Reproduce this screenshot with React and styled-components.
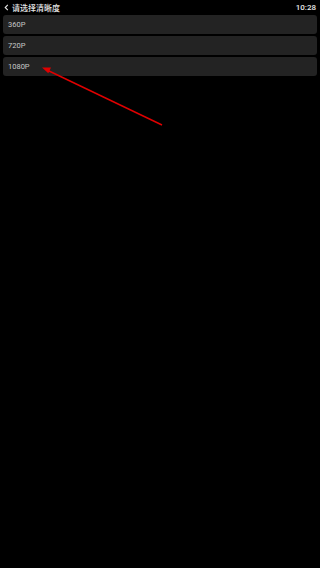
import React from "react";
import styled, { createGlobalStyle } from "styled-components";

const Global = createGlobalStyle`
  html, body { margin: 0; padding: 0; background: #000; }
  body { font-family: "Noto Sans", "Noto Sans CJK SC", sans-serif; }
  #root { min-height: 568px; }
`;

const Screen = styled.div`
  position: relative;
  width: 320px;
  height: 568px;
  background: #000;
  overflow: hidden;
`;

const TopBar = styled.div`
  height: 15px;
  display: flex;
  align-items: center;
  justify-content: space-between;
  padding: 0 4px 0 4px;
  color: #e8e8e8;
`;

const TitleWrap = styled.div`
  display: flex;
  align-items: center;
  gap: 3px;
`;

const Title = styled.span`
  font-family: "Noto Sans CJK SC", sans-serif;
  font-size: 8px;
  font-weight: 500;
  line-height: 14px;
`;

const Time = styled.span`
  font-family: "Roboto", sans-serif;
  font-size: 8px;
  font-weight: 500;
  line-height: 14px;
`;

const List = styled.div`
  display: flex;
  flex-direction: column;
  gap: 2px;
  padding: 0 3px 0 3px;
`;

const Row = styled.div`
  height: 19px;
  background: #232323;
  border-radius: 3px;
  display: flex;
  align-items: center;
  padding-left: 5px;
  font-family: "Roboto", sans-serif;
  font-size: 7.5px;
  color: #c8c8c8;
`;

const Arrow = styled.svg`
  position: absolute;
  left: 0;
  top: 0;
  pointer-events: none;
`;

export default function App() {
  const options = ["360P", "720P", "1080P"];
  return (
    <>
      <Global />
      <Screen>
        <TopBar>
          <TitleWrap>
            <svg width="5" height="7" viewBox="0 0 5 7">
              <path d="M3.8 0.8 L1.2 3.5 L3.8 6.2" stroke="#e8e8e8" strokeWidth="1.1" fill="none" />
            </svg>
            <Title>请选择清晰度</Title>
          </TitleWrap>
          <Time>10:28</Time>
        </TopBar>
        <List>
          {options.map((o) => (
            <Row key={o}>{o}</Row>
          ))}
        </List>
        <Arrow width="320" height="568" viewBox="0 0 320 568">
          <line x1="162" y1="125" x2="48" y2="70.5" stroke="#e00000" strokeWidth="1.4" />
          <polygon points="42,67.5 51,67.6 48.3,73.3" fill="#e00000" />
        </Arrow>
      </Screen>
    </>
  );
}
